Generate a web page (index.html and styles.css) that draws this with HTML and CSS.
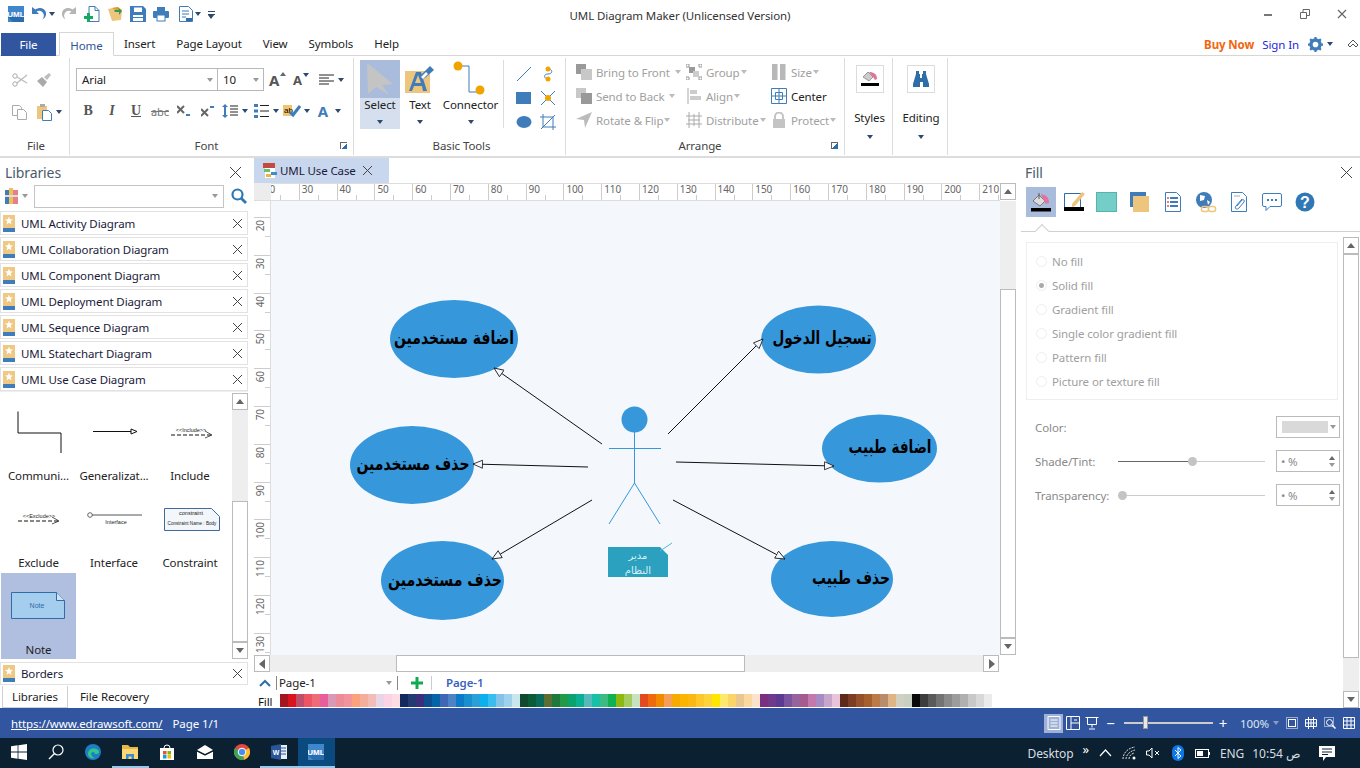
FILE: index.html
```html
<!DOCTYPE html>
<html lang="en">
<head>
    <meta charset="UTF-8">
    <title>UML Diagram Maker (Unlicensed Version)</title>
    <link rel="stylesheet" href="styles.css">
</head>
<body>

<!-- title bar -->
<header class="titlebar">
    <div class="qat">
        <svg width="16" height="16" viewBox="0 0 16 16"><rect width="16" height="16" fill="#3f86cc"/><path d="M0 11l5 5h11V11z" fill="#2a6cb0"/><text x="8" y="11" class="logo-text">UML</text></svg>
        <svg width="16" height="16" viewBox="0 0 16 16"><path d="M1 1v7h7L5.600 5.600C8 3.800 11.500 5 12.600 8c.6 1.800.2 3.800-1.200 5.500 3.200-1.600 4.400-5 3.200-8C13.200 2 8.500.6 4.400 3.500z" fill="#3f7cba"/></svg>
        <i class="caret dark cell"></i>
        <svg width="16" height="16" viewBox="0 0 16 16"><path d="M15 1v7H8l2.400-2.400C8 3.800 4.500 5 3.400 8c-.6 1.800-.2 3.800 1.200 5.500C1.400 11.900.2 8.500 1.400 5.500 2.800 2 7.500.6 11.600 3.500z" fill="#b5b5b5"/></svg>
        <svg width="16" height="16" viewBox="0 0 16 16"><path d="M5 .5h6l4 4v11H5z" fill="#fff" stroke="#3f7cba"/><path d="M11 .5v4h4" fill="none" stroke="#3f7cba"/><path d="M3 7h3v3h3v3H6v3H3v-3H0v-3h3z" fill="#18a866"/></svg>
        <svg width="16" height="16" viewBox="0 0 16 16"><path d="M1 3l9-2 5 3-1 10-9 1z" fill="#eec57d"/><path d="M5 2l6-1 4 3-2 2z" fill="#d99d3a"/><path d="M7 4h5l-1-2 4 3-3 4V6H8z" fill="#2f9a55"/></svg>
        <svg width="16" height="16" viewBox="0 0 16 16"><path d="M0 0h13l3 3v13H0z" fill="#3f7cba"/><rect x="4" y="1.500" width="8" height="4.500" fill="#fff"/><rect x="3" y="9" width="10" height="6" fill="#fff"/><rect x="3" y="11" width="10" height="1" fill="#3f7cba"/></svg>
        <svg width="16" height="16" viewBox="0 0 16 16"><rect x="4" y="1" width="8" height="5" fill="#3f7cba"/><rect y="5" width="16" height="7" rx="1" fill="#3f7cba"/><rect x="4" y="9" width="8" height="6" fill="#fff" stroke="#3f7cba"/></svg>
        <svg class="qat-doc" width="14" height="16" viewBox="0 0 14 16"><path d="M.5.500h9l4 4v11H.5z" fill="#fff" stroke="#3f7cba"/><path d="M3 5h7M3 8h7M3 11h4" stroke="#3f7cba"/><path d="M7 12h6v3H7z" fill="#2f6da8"/></svg>
        <i class="caret dark cell"></i>
        <span class="qat-more"></span>
    </div>
    <div class="title">UML Diagram Maker (Unlicensed Version)</div>
    <div class="winbtns">
        <svg width="10" height="10" viewBox="0 0 10 10"><path d="M1 6h8" stroke="#777" stroke-width="2"/></svg>
        <svg width="10" height="10" viewBox="0 0 10 10"><path d="M.5 3.500h6v6h-6zM3 3.500V.5h6.500v6H7" fill="none" stroke="#666"/></svg>
        <svg width="10" height="10" viewBox="0 0 10 10"><path d="M1 1l8 8M9 1l-8 8" stroke="#666" stroke-width="1.200"/></svg>
    </div>
</header>

<!-- ribbon tabs -->
<nav class="tabs">
    <a class="tab-file">File</a>
    <a class="tab-home">Home</a>
    <a>Insert</a>
    <a>Page Layout</a>
    <a>View</a>
    <a>Symbols</a>
    <a>Help</a>
    <div class="tabs-right">
        <b class="buy">Buy Now</b>
        <span class="signin">Sign In</span>
        <svg width="15" height="15" viewBox="0 0 16 16"><circle cx="8" cy="8" r="4.800" fill="none" stroke="#3f7cba" stroke-width="3.600"/><path d="M8 0v16M0 8h16M2.300 2.300l11.400 11.400M13.700 2.300L2.300 13.700" stroke="#3f7cba" stroke-width="2.400" stroke-dasharray="2.500 11 2.500 0"/></svg>
        <i class="caret dark"></i>
        <svg class="collapse" width="12" height="10" viewBox="0 0 12 10"><path d="M1 6l5-5 5 5-2 2-3-3-3 3z" fill="none" stroke="#555"/></svg>
    </div>
</nav>

<!-- ribbon -->
<section class="ribbon">
    <div class="group g-file">
        <div class="body file-grid">
            <svg width="16" height="16" viewBox="0 0 16 16"><circle cx="3" cy="4" r="2.200" fill="none" stroke="#aaa"/><circle cx="3" cy="12" r="2.200" fill="none" stroke="#aaa"/><path d="M5 5l10 6M5 11l10-8" stroke="#bbb" stroke-width="1.300"/></svg>
            <svg width="16" height="16" viewBox="0 0 16 16"><path d="M1 9l5-4 5 5-4 5z" fill="#aaa"/><path d="M8 5l5-4 2 2-4 5z" fill="#bdbdbd"/></svg>
            <svg width="16" height="16" viewBox="0 0 16 16"><path d="M.5 1.500h7l2 2v8h-9z" fill="#fff" stroke="#aaa"/><path d="M5.500 5.500h6l3 3v7h-9z" fill="#fff" stroke="#aaa"/></svg>
            <span class="paste">
                <svg width="16" height="17" viewBox="0 0 16 17"><rect y="2" width="10" height="13" fill="#eec57d"/><rect x="3" y="0" width="5" height="3" fill="#aaa"/><path d="M5.500 6.500h6l3 3v7h-9z" fill="#fff" stroke="#3f7cba"/></svg>
                <i class="caret dark"></i>
            </span>
        </div>
        <div class="group-label">File</div>
    </div>

    <div class="group g-font">
        <div class="body font-body">
            <div class="font-row">
                <div class="combo combo-font"><span>Arial</span><i class="caret"></i></div>
                <div class="combo combo-size"><span>10</span><i class="caret"></i></div>
                <span class="grow-a">A<i class="caret up dark"></i></span>
                <span class="grow-a small">A<i class="caret dark"></i></span>
                <svg class="align-ic" width="15" height="12" viewBox="0 0 15 12"><path d="M0 1h15M0 4h10M0 7h15M0 10h10" stroke="#222"/></svg>
                <i class="caret dark"></i>
            </div>
            <div class="font-row row2">
                <b class="fmt serif">B</b>
                <i class="fmt serif">I</i>
                <u class="fmt serif">U</u>
                <s class="fmt small-fmt">abc</s>
                <span class="fmt">
                    <svg width="14" height="12" viewBox="0 0 14 12"><path d="M0 1l7 7M7 1L0 8" stroke="#666" stroke-width="2"/><path d="M9 10h4" stroke="#3f7cba" stroke-width="2"/></svg>
                </span>
                <span class="fmt">
                    <svg width="14" height="12" viewBox="0 0 14 12"><path d="M0 4l7 7M7 4l-7 7" stroke="#666" stroke-width="2"/><path d="M9 2h4" stroke="#3f7cba" stroke-width="2"/></svg>
                </span>
                <span class="fmt2">
                    <svg width="16" height="16" viewBox="0 0 16 16"><path d="M3 1l3 3H4v8h2l-3 3-3-3h2V4H0z" fill="#3f7cba"/><path d="M8 3h8M8 6h8M8 9h8M8 12h8" stroke="#222"/></svg>
                </span>
                <i class="caret dark"></i>
                <span class="fmt2">
                    <svg width="15" height="14" viewBox="0 0 15 14"><path d="M0 0h4v3H0zM0 5.500h4v3H0zM0 11h4v3H0z" fill="#3f7cba"/><path d="M6 1.500h9M6 7h9M6 12.500h9" stroke="#222"/></svg>
                </span>
                <i class="caret dark"></i>
                <span class="fmt2">
                    <svg width="18" height="14" viewBox="0 0 18 14"><rect y="1" width="9" height="11" fill="#f1c470"/><text x="1" y="9" class="mini">ab</text><path d="M7 8l3 3 7-9" fill="none" stroke="#3f7cba" stroke-width="3"/></svg>
                </span>
                <i class="caret dark"></i>
                <span class="fmt2 blue-a">A</span>
                <i class="caret dark"></i>
            </div>
        </div>
        <div class="group-label with-launcher">Font</div>
        <i class="launcher"></i>
    </div>

    <div class="group g-tools">
        <div class="body tools-body">
            <div class="big selected">
                <div class="big-top">
                    <svg width="32" height="34" viewBox="0 0 32 34"><path d="M3 1l26 21-11 1 7 10-13-8-8 7z" fill="#c4c4c4"/></svg>
                </div>
                <div class="big-bottom">Select<i class="caret dark"></i></div>
            </div>
            <div class="big">
                <div class="big-top">
                    <svg width="30" height="28" viewBox="0 0 30 28"><rect y="6" width="25" height="22" fill="#eec57d"/><path d="M4 26L11 7h5l6 19h-4l-1-5H9l-2 5zM10 18h6l-3-8z" fill="#3f7cba"/><path d="M16 10l9-9 4 4-9 8-5 2z" fill="#3f7cba"/><path d="M16 12l5-5 2 2-5 5z" fill="#fff"/></svg>
                </div>
                <div class="big-bottom">Text<i class="caret dark"></i></div>
            </div>
            <div class="big wide">
                <div class="big-top">
                    <svg width="36" height="36" viewBox="0 0 36 36"><path d="M5 5h11v26h11" fill="none" stroke="#3f7cba"/><circle cx="5" cy="5" r="4.500" fill="#f0a400"/><circle cx="27" cy="29" r="4.500" fill="#f0a400"/></svg>
                </div>
                <div class="big-bottom">Connector<i class="caret dark"></i></div>
            </div>
            <div class="tool-sep"></div>
            <div class="tool-grid">
                <svg width="16" height="16" viewBox="0 0 16 16"><path d="M1 15L15 1" stroke="#3f7cba"/></svg>
                <svg width="16" height="16" viewBox="0 0 16 16"><path d="M8 3c5 0 5 5 0 5s-4 5 0 5" fill="none" stroke="#3f7cba"/><circle cx="8" cy="3" r="2.500" fill="#f0a400"/><circle cx="8" cy="13" r="2.500" fill="#f0a400"/></svg>
                <svg width="16" height="16" viewBox="0 0 16 16"><rect y="2" width="15" height="12" fill="#3f7cba"/></svg>
                <svg width="16" height="16" viewBox="0 0 16 16"><path d="M1 1l14 14M15 1L1 15" stroke="#3f7cba"/><circle cx="8" cy="8" r="3" fill="#f0a400"/></svg>
                <svg width="16" height="16" viewBox="0 0 16 16"><ellipse cx="8" cy="8" rx="7.500" ry="6" fill="#3f7cba"/></svg>
                <svg width="16" height="16" viewBox="0 0 16 16"><path d="M3 0v13h13M0 3h13v13M1 15L15 1" fill="none" stroke="#3f7cba"/></svg>
            </div>
        </div>
        <div class="group-label tools-label">Basic Tools</div>
    </div>

    <div class="group g-arrange">
        <div class="body arrange">
            <div class="arr-col c1">
                <div class="arr"><svg width="16" height="16" viewBox="0 0 16 16"><rect width="10" height="10" fill="#999"/><rect x="5" y="5" width="11" height="11" fill="#c8c8c8"/></svg>Bring to Front<i class="caret"></i></div>
                <div class="arr"><svg width="16" height="16" viewBox="0 0 16 16"><rect width="10" height="10" fill="#c8c8c8"/><rect x="5" y="5" width="11" height="11" fill="#999"/></svg>Send to Back<i class="caret"></i></div>
                <div class="arr"><svg width="16" height="16" viewBox="0 0 16 16"><path d="M0 7L16 0 9 16 8 8z" fill="#bbb"/></svg>Rotate &amp; Flip<i class="caret tight"></i></div>
            </div>
            <div class="arr-col c2">
                <div class="arr"><svg width="16" height="16" viewBox="0 0 16 16"><path d="M0 0h3v3H0zM13 0h3v3h-3zM0 13h3v3H0zM13 13h3v3h-3z" fill="none" stroke="#999"/><rect x="3" y="3" width="6" height="6" fill="#999"/><rect x="7" y="7" width="6" height="6" fill="#ccc"/></svg>Group<i class="caret tight"></i></div>
                <div class="arr"><svg width="16" height="16" viewBox="0 0 16 16"><path d="M2 0v16" stroke="#aaa"/><rect x="4" y="2" width="7" height="4" fill="#ccc"/><rect x="4" y="8" width="11" height="4" fill="#ccc"/></svg>Align<i class="caret tight"></i></div>
                <div class="arr"><svg width="16" height="16" viewBox="0 0 16 16"><path d="M3 0v16M13 0v16M0 4h16M0 12h16M8 2v12M2 8h12" stroke="#aaa" fill="none"/></svg>Distribute<i class="caret tight"></i></div>
            </div>
            <div class="arr-col c3">
                <div class="arr"><svg width="16" height="16" viewBox="0 0 16 16"><rect x="1" width="5.500" height="16" fill="#b8b8b8"/><rect x="9" width="5.500" height="16" fill="#b8b8b8"/></svg>Size<i class="caret tight"></i></div>
                <div class="arr on"><svg width="16" height="16" viewBox="0 0 16 16"><path d="M.5.500h15v15H.5zM4.500 4.500h7v7h-7zM8 .5v15M.5 8h15" fill="none" stroke="#3f7cba"/></svg>Center</div>
                <div class="arr"><svg width="16" height="16" viewBox="0 0 16 16"><path d="M4 7V4.500a4 4 0 0 1 8 0V7" fill="none" stroke="#c4c4c4" stroke-width="2"/><rect x="2" y="7" width="12" height="9" fill="#c4c4c4"/></svg>Protect<i class="caret tight"></i></div>
            </div>
        </div>
        <div class="group-label with-launcher">Arrange</div>
        <i class="launcher"></i>
    </div>

    <div class="group g-styles">
        <div class="box-btn">
            <div class="box">
                <svg width="18" height="18" viewBox="0 0 18 18"><path d="M2 7l5-5 5 5-4 4z" fill="#ccc" stroke="#666" stroke-width=".6"/><path d="M8 2c5 0 8 2 8 7l-2 1-2-3z" fill="#e0749c"/><rect x="0" y="13" width="18" height="3" fill="#000"/></svg>
            </div>
            <span>Styles</span>
            <i class="caret dark"></i>
        </div>
    </div>

    <div class="group g-editing">
        <div class="box-btn">
            <div class="box">
                <svg width="16" height="16" viewBox="0 0 16 16"><path d="M3 0h3v3h1v4h2V3h1V0h3v3l3 10v3h-6v-5H7v5H0v-3L3 3z" fill="#2f6da8"/></svg>
            </div>
            <span>Editing</span>
            <i class="caret dark"></i>
        </div>
    </div>
</section>

<main class="workspace">
    <!-- left: libraries -->
    <aside class="libraries">
        <div class="pane-title"><span>Libraries</span><i class="close"></i></div>
        <div class="lib-search">
            <svg width="14" height="16" viewBox="0 0 14 16"><rect y="2" width="4" height="14" fill="#3f7cba"/><rect x="4" y="0" width="4" height="16" fill="#eec057"/><rect x="8" y="2" width="5" height="14" fill="#e3808a"/><rect y="7" width="13" height="2" fill="#ddd"/></svg>
            <i class="caret"></i>
            <div class="search-box"><i class="caret"></i></div>
            <svg width="16" height="16" viewBox="0 0 16 16"><circle cx="6.500" cy="6.500" r="5" fill="none" stroke="#2f77b5" stroke-width="2.200"/><path d="M10 10l5 5" stroke="#2f77b5" stroke-width="2.800"/></svg>
        </div>
        <ul class="lib-list">
            <li><i class="lib-ic"></i>UML Activity Diagram<i class="close small"></i></li>
            <li><i class="lib-ic"></i>UML Collaboration Diagram<i class="close small"></i></li>
            <li><i class="lib-ic"></i>UML Component Diagram<i class="close small"></i></li>
            <li><i class="lib-ic"></i>UML Deployment Diagram<i class="close small"></i></li>
            <li><i class="lib-ic"></i>UML Sequence Diagram<i class="close small"></i></li>
            <li><i class="lib-ic"></i>UML Statechart Diagram<i class="close small"></i></li>
            <li><i class="lib-ic"></i>UML Use Case Diagram<i class="close small"></i></li>
        </ul>
        <div class="symbols-wrap">
            <div class="symbols">
                <div class="sym row-a">
                    <svg width="75" height="72" viewBox="0 0 75 72"><path d="M17 18.500V40h43v20" fill="none" stroke="#111"/></svg>
                    <span>Communi...</span>
                </div>
                <div class="sym row-a">
                    <svg width="75" height="72" viewBox="0 0 75 72"><path d="M16 38.500h38" stroke="#111"/><path d="M54 36l6 2.500-6 2.500z" fill="#fff" stroke="#111"/></svg>
                    <span>Generalizat...</span>
                </div>
                <div class="sym row-a">
                    <svg width="75" height="72" viewBox="0 0 75 72"><text x="38" y="39" class="tiny">&lt;&lt;Include&gt;&gt;</text><path d="M18 42h40" stroke="#111" stroke-dasharray="4 2"/><path d="M52 38l7 4-7 3" fill="none" stroke="#111" stroke-width=".7"/></svg>
                    <span>Include</span>
                </div>
                <div class="sym row-b">
                    <svg width="75" height="62" viewBox="0 0 75 62"><text x="38" y="31" class="tiny">&lt;&lt;Exclude&gt;&gt;</text><path d="M17 34h40" stroke="#111" stroke-dasharray="4 2"/><path d="M51 30l7 4-7 3" fill="none" stroke="#111" stroke-width=".7"/></svg>
                    <span>Exclude</span>
                </div>
                <div class="sym row-b">
                    <svg width="75" height="62" viewBox="0 0 75 62"><circle cx="13" cy="28" r="2.300" fill="#fff" stroke="#666"/><path d="M15 28h50" stroke="#555"/><text x="39" y="37" class="tiny">Interface</text></svg>
                    <span>Interface</span>
                </div>
                <div class="sym row-b">
                    <svg width="75" height="62" viewBox="0 0 75 62"><path d="M11.500 21.500h47l8 8v14h-55z" fill="#f3f6fb" stroke="#3e6b9c"/><text x="38" y="28" class="tiny">constraint</text><text x="39" y="38" class="tiny narrow">Constraint Name : Body</text></svg>
                    <span>Constraint</span>
                </div>
                <div class="sym row-c selected-sym">
                    <svg width="75" height="62" viewBox="0 0 75 62"><path d="M10.500 19.500h45l8 8v18h-53z" fill="#a5cdee" stroke="#2f6da8"/><path d="M55.500 19.500v8h8" fill="#cfe3f5" stroke="#2f6da8"/><text x="36" y="35" class="tiny blue">Note</text></svg>
                    <span>Note</span>
                </div>
            </div>
            <div class="vscroll lib-scroll">
                <button class="sb up"></button>
                <div class="track"><div class="gap-a"></div><div class="thumb"></div></div>
                <button class="sb down"></button>
            </div>
        </div>
        <div class="lib-item-borders"><i class="lib-ic"></i>Borders<i class="close small"></i></div>
        <div class="lib-tabs"><span class="active">Libraries</span><span>File Recovery</span></div>
    </aside>

    <!-- center: drawing -->
    <section class="center">
        <div class="doc-tabs">
            <div class="doc-tab">
                <svg width="16" height="16" viewBox="0 0 16 16"><rect x="1" y="0" width="12" height="5" fill="#c24a3f"/><rect x="3" y="5" width="10" height="10" fill="#fff"/><rect x="2" y="6" width="6" height="3" fill="#6cbf6a"/><rect x="4" y="11" width="5" height="3" fill="#eeb53c"/><rect x="9" y="9" width="6" height="3" fill="#3f8ecc"/></svg>
                <span>UML Use Case</span>
                <i class="close small"></i>
            </div>
        </div>
        <div class="ruler-row">
            <div class="ruler-corner"></div>
            <div class="h-ruler"><div id="hRuler" class="h-ruler-in"></div></div>
            <button class="sb up"></button>
        </div>
        <div class="canvas-row">
            <div class="v-ruler"><div id="vRuler" class="v-ruler-in"></div></div>
            <div class="canvas">
                <svg width="729" height="454" viewBox="271 201 729 454">
                    <defs>
                        <marker id="tri" markerWidth="12" markerHeight="10" refX="10" refY="4.500" orient="auto" markerUnits="userSpaceOnUse">
                            <path d="M.5.500L10 4.500.5 8.500z" fill="#f4f7fb" stroke="#111" stroke-width=".8"/>
                        </marker>
                    </defs>
                    <ellipse class="uc" cx="454" cy="339" rx="64" ry="39"/>
                    <ellipse class="uc" cx="818.500" cy="339.500" rx="57.500" ry="34"/>
                    <ellipse class="uc" cx="412" cy="465" rx="62" ry="39"/>
                    <ellipse class="uc" cx="879.500" cy="448.500" rx="57.500" ry="34"/>
                    <ellipse class="uc" cx="442.500" cy="580.500" rx="61.500" ry="39.500"/>
                    <ellipse class="uc" cx="832" cy="579" rx="61" ry="38"/>

                    <text class="uc-text" x="454" y="344" textLength="120" lengthAdjust="spacingAndGlyphs">اضافة مستخدمين</text>
                    <text class="uc-text" x="822" y="344" textLength="99" lengthAdjust="spacingAndGlyphs">تسجيل الدخول</text>
                    <text class="uc-text" x="413" y="470" textLength="113" lengthAdjust="spacingAndGlyphs">حذف مستخدمين</text>
                    <text class="uc-text" x="890" y="453" textLength="83" lengthAdjust="spacingAndGlyphs">اضافة طبيب</text>
                    <text class="uc-text" x="445" y="586" textLength="114" lengthAdjust="spacingAndGlyphs">حذف مستخدمين</text>
                    <text class="uc-text" x="851" y="584" textLength="78" lengthAdjust="spacingAndGlyphs">حذف طبيب</text>

                    <path class="assoc" d="M602 444L494 368"/>
                    <path class="assoc" d="M668 434L763 339"/>
                    <path class="assoc" d="M588 467L473 464"/>
                    <path class="assoc" d="M676 462L834 466"/>
                    <path class="assoc" d="M592 500L492 559"/>
                    <path class="assoc" d="M673 500L785 559"/>

                    <circle cx="634.500" cy="419.500" r="13" fill="#3797db"/>
                    <path class="actor" d="M634.500 432v51M609 448.500h52M609 524l25.500-41 25.500 41"/>

                    <path d="M608 547h52l8 8v22h-60z" fill="#2ba0bf"/>
                    <path d="M660 551l12-8" stroke="#55b9d2"/>
                    <text class="note-text" x="638" y="559">مدير</text>
                    <text class="note-text" x="638" y="574">النظام</text>
                </svg>
            </div>
            <div class="vscroll canvas-scroll">
                <div class="track"><div class="gap-b"></div><div class="thumb"></div></div>
                <button class="sb down"></button>
            </div>
        </div>
        <div class="hscroll">
            <button class="sb left"></button>
            <div class="htrack"><div class="hthumb"></div></div>
            <button class="sb right"></button>
        </div>
        <div class="page-bar">
            <svg width="12" height="8" viewBox="0 0 12 8"><path d="M1 7l5-5 5 5" fill="none" stroke="#2f6da8" stroke-width="2"/></svg>
            <div class="page-select">Page-1<i class="caret"></i></div>
            <svg width="14" height="14" viewBox="0 0 14 14"><path d="M5.500 1h3v4.500H13v3H8.500V13h-3V8.500H1v-3h4.500z" fill="#10ab50"/></svg>
            <span class="page-name">Page-1</span>
        </div>
        <div class="color-bar">
            <span class="fill-label">Fill</span>
            <div id="swatches" class="swatches"></div>
        </div>
    </section>

    <!-- right: fill panel -->
    <aside class="fillpane">
        <div class="pane-title fill-title"><span>Fill</span><i class="close"></i></div>
        <div class="fill-icons">
            <span class="on"><svg width="22" height="22" viewBox="0 0 22 22"><path d="M3 10l6-6 6 6-5 5z" fill="#ddd" stroke="#555" stroke-width=".7"/><path d="M9 2v6" stroke="#555"/><path d="M11 3c5 1 8 3 8 9l-3 1-3-5z" fill="#e0749c"/><rect x="1" y="17" width="20" height="3.500" fill="#000"/></svg></span>
            <span><svg width="22" height="22" viewBox="0 0 22 22"><path d="M1.500 2.500h16v14h-16z" fill="#fff" stroke="#2f6da8"/><path d="M9 13L19 1l3 2-10 12-3 1z" fill="#eec57d"/><rect x="1" y="16" width="20" height="4" fill="#000"/></svg></span>
            <span><svg width="22" height="22" viewBox="0 0 22 22"><rect x=".5" y="1.500" width="20" height="19" fill="#74cdc6" stroke="#54b5ad"/></svg></span>
            <span><svg width="22" height="22" viewBox="0 0 22 22"><rect x="1" y="1" width="16" height="15" fill="#3f7cba"/><rect x="4" y="5" width="16" height="16" fill="#eec57d"/></svg></span>
            <span><svg width="18" height="22" viewBox="0 0 18 22"><path d="M1.500 1.500h11l4 4v15h-15z" fill="#fff" stroke="#3f7cba"/><path d="M6 7h8M6 11h8M6 15h8" stroke="#3f7cba" stroke-width="2"/><path d="M3 7h2M3 11h2M3 15h2" stroke="#e3808a" stroke-width="2"/></svg></span>
            <span><svg width="22" height="22" viewBox="0 0 22 22"><circle cx="9" cy="9" r="8" fill="#3f7cba"/><path d="M5 4l5 1-1 4-4 1zM12 9l3 2-2 3z" fill="#fff"/><rect x="6.500" y="15.500" width="7" height="5" rx="2" fill="none" stroke="#eec57d" stroke-width="1.500"/><rect x="13.500" y="15.500" width="7" height="5" rx="2" fill="none" stroke="#eec57d" stroke-width="1.500"/></svg></span>
            <span><svg width="16" height="22" viewBox="0 0 16 22"><path d="M.5 1.500h11l4 4v15H.5z" fill="#fff" stroke="#3f7cba"/><path d="M3 5h6" stroke="#aaa"/><path d="M11 8l-6 7c-2 3 1 4 3 2l5-6c1-2-1-3-2-2l-5 6" fill="none" stroke="#3f7cba"/></svg></span>
            <span><svg width="20" height="20" viewBox="0 0 20 20"><path d="M2 1.500h16a1.500 1.500 0 0 1 1.500 1.500v10a1.500 1.500 0 0 1-1.500 1.500H8l-4 4v-4H2A1.500 1.500 0 0 1 .5 13V3A1.500 1.500 0 0 1 2 1.500z" fill="#fff" stroke="#3f7cba"/><path d="M5 8h2M9 8h2M13 8h2" stroke="#3f7cba" stroke-width="2"/></svg></span>
            <span><svg width="20" height="20" viewBox="0 0 20 20"><circle cx="10" cy="10" r="9.500" fill="#2f77b5"/><text x="10" y="15.500" class="help">?</text></svg></span>
        </div>
        <div class="notch-line"><i></i></div>
        <div class="fill-main">
            <div class="fill-content">
                <div class="fill-options">
                    <label><i class="radio"></i>No fill</label>
                    <label><i class="radio dot"></i>Solid fill</label>
                    <label><i class="radio"></i>Gradient fill</label>
                    <label><i class="radio"></i>Single color gradient fill</label>
                    <label><i class="radio"></i>Pattern fill</label>
                    <label><i class="radio"></i>Picture or texture fill</label>
                </div>
                <div class="prop">
                    <span class="prop-name">Color:</span>
                    <div class="color-box"><i></i><em class="caret"></em></div>
                </div>
                <div class="prop">
                    <span class="prop-name">Shade/Tint:</span>
                    <div class="slider half"><i></i></div>
                    <div class="spin">
                        <span>• %</span>
                        <em class="spin-arrows"><i class="caret up"></i><i class="caret"></i></em>
                    </div>
                </div>
                <div class="prop">
                    <span class="prop-name">Transparency:</span>
                    <div class="slider"><i></i></div>
                    <div class="spin">
                        <span>• %</span>
                        <em class="spin-arrows"><i class="caret up"></i><i class="caret"></i></em>
                    </div>
                </div>
            </div>
            <div class="vscroll fill-scroll">
                <button class="sb up"></button>
                <div class="track"><div class="thumb"></div></div>
                <button class="sb down"></button>
            </div>
        </div>
    </aside>
</main>

<!-- status bar -->
<footer class="statusbar">
    <a class="site">https://www.edrawsoft.com/</a>
    <span class="pageno">Page 1/1</span>
    <div class="status-right">
        <span class="view on"><svg width="14" height="14" viewBox="0 0 14 14"><path d="M1 .5h12v13H1zM3.500 4h7M3.500 7h7M3.500 10h7" fill="none" stroke="#fff"/></svg></span>
        <span class="view"><svg width="14" height="14" viewBox="0 0 14 14"><path d="M.5.500h13v13H.5zM5 .5v13M8 4h3M5 7h8" fill="none" stroke="#fff"/></svg></span>
        <span class="view"><svg width="14" height="14" viewBox="0 0 14 14"><path d="M.5 1.500h13M2.500 1.500v7h9v-7M7 8.500v3M4 13h6" fill="none" stroke="#fff"/></svg></span>
        <span class="zoom-sign">−</span>
        <div class="zoom-slider"><i></i></div>
        <span class="zoom-sign plus">+</span>
        <span class="zoom-val">100%</span>
        <i class="caret"></i>
        <span class="view r"><svg width="12" height="12" viewBox="0 0 12 12"><path d="M.5.500h11v11H.5z" fill="none" stroke="#fff" stroke-dasharray="1 1"/><rect x="2.500" y="2.500" width="7" height="7" fill="none" stroke="#fff"/></svg></span>
        <span class="view r"><svg width="12" height="12" viewBox="0 0 12 12"><path d="M.5 2.500h11v7H.5zM3.500 0v12M8.500 0v12M6 2v8M1 6h10" fill="none" stroke="#fff"/></svg></span>
        <span class="view r"><svg width="12" height="12" viewBox="0 0 12 12"><path d="M.5.500h9v9h-9z" fill="none" stroke="#fff" stroke-dasharray="1 1"/><circle cx="5.500" cy="5.500" r="3" fill="none" stroke="#fff"/><path d="M8 8l3.500 3.500" stroke="#fff" stroke-width="1.500"/></svg></span>
        <span class="view r"><svg width="12" height="12" viewBox="0 0 12 12"><path d="M.5.500h11v11H.5zM4 0v12M8 0v12M0 4h12M0 8h12" fill="none" stroke="#fff"/></svg></span>
    </div>
</footer>

<!-- windows taskbar -->
<footer class="taskbar">
    <div class="apps">
        <span><svg width="16" height="16" viewBox="0 0 16 16"><path d="M0 2.300L6.600 1.300v6.200H0zM7.400 1.200L16 0v7.500H7.400zM0 8.400h6.600v6.300L0 13.700zM7.400 8.400H16V16l-8.600-1.200z" fill="#fff"/></svg></span>
        <span><svg width="16" height="16" viewBox="0 0 16 16"><circle cx="10" cy="6" r="5" fill="none" stroke="#fff" stroke-width="1.200"/><path d="M6.500 9.500L1 15" stroke="#fff" stroke-width="1.400"/></svg></span>
        <span><svg width="16" height="16" viewBox="0 0 16 16"><circle cx="8" cy="8" r="8" fill="#1b7fc4"/><path d="M3 10c0-5 6-7 10-4 2 2 1 4-2 4-2 0-1-2-3-2-3 0-2 5 2 6-4 1-7-1-7-4z" fill="#36c48b"/></svg></span>
        <span class="open"><svg width="16" height="14" viewBox="0 0 16 14"><path d="M0 0h6l2 2h8v12H0z" fill="#eab544"/><path d="M0 4h16v10H0z" fill="#fbd875"/><path d="M4 14V9h8v5H9.500v-2.500h-3V14z" fill="#3a8dcf"/></svg></span>
        <span><svg width="16" height="16" viewBox="0 0 16 16"><path d="M1 4h14v12H1z" fill="#fff"/><path d="M5 4a3 3 0 0 1 6 0" fill="none" stroke="#fff"/><rect x="4" y="7" width="3.500" height="3.500" fill="#f25022"/><rect x="8.500" y="7" width="3.500" height="3.500" fill="#7fba00"/><rect x="4" y="11" width="3.500" height="3.500" fill="#00a4ef"/><rect x="8.500" y="11" width="3.500" height="3.500" fill="#ffb900"/></svg></span>
        <span><svg width="16" height="14" viewBox="0 0 16 14"><path d="M0 5l8-5 8 5-8 4z" fill="#fff"/><path d="M0 6.500l8 4 8-4V14H0z" fill="#fff"/><path d="M0 6l8 4 8-4" fill="none" stroke="#0b2030"/></svg></span>
        <span><svg width="16" height="16" viewBox="0 0 16 16"><circle cx="8" cy="8" r="8" fill="#e8453c"/><path d="M8 8L15 4a8 8 0 0 1-5 11.700z" fill="#fbc02d"/><path d="M8 8L10 15.700A8 8 0 0 1 1 4z" fill="#3aa655"/><circle cx="8" cy="8" r="3.800" fill="#4a8bf0" stroke="#fff"/></svg></span>
        <span class="open"><svg width="16" height="16" viewBox="0 0 16 16"><rect x="6" y="1" width="10" height="14" fill="#e8eef7"/><path d="M9 4h6M9 7h6M9 10h6" stroke="#2a5699"/><path d="M0 2l10-2v16L0 14z" fill="#2a5699"/><text x="5" y="11" class="w-text">W</text></svg></span>
        <span class="open active"><svg width="16" height="16" viewBox="0 0 16 16"><rect width="16" height="16" fill="#3f86cc"/><path d="M0 11l5 5h11V11z" fill="#2a6cb0"/><text x="8" y="11" class="logo-text">UML</text></svg></span>
    </div>
    <div class="tray">
        <span class="t-desktop">Desktop</span>
        <span class="t-more">»</span>
        <svg width="13" height="8" viewBox="0 0 13 8"><path d="M1 7l5.500-6L12 7" fill="none" stroke="#fff" stroke-width="1.200"/></svg>
        <svg width="14" height="14" viewBox="0 0 14 14"><path d="M1 13C1 7 6 2 13 1M4 13c0-4 4-8 9-9M7 13c0-3 2-5 5-6" fill="none" stroke="#ddd" stroke-dasharray="2 1"/><circle cx="12" cy="12" r="1.500" fill="#fff"/></svg>
        <svg width="15" height="12" viewBox="0 0 15 12"><path d="M.5 4h2.500l3-3v10L3 8H.5z" fill="none" stroke="#fff"/><path d="M9 4l4 4M13 4l-4 4" stroke="#fff"/></svg>
        <svg class="bt" width="12" height="16" viewBox="0 0 12 16"><rect width="12" height="16" rx="6" fill="#0a78e8"/><path d="M3 5l6 6-3 2.500v-11L9 5l-6 6" fill="none" stroke="#fff"/></svg>
        <svg width="15" height="9" viewBox="0 0 15 9"><rect x=".5" y=".5" width="13" height="8" fill="none" stroke="#fff"/><rect x="2" y="2" width="6" height="5" fill="#fff"/><rect x="14" y="3" width="1" height="3" fill="#fff"/></svg>
        <span class="t-lang">ENG</span>
        <span class="t-clock">10:54 <span lang="ar">ص</span></span>
        <svg class="t-note" width="16" height="15" viewBox="0 0 16 15"><path d="M0 0h16v11H7l-3 4v-4H0z" fill="#fff"/><path d="M3 3h10M3 6h10M3 8.500h6" stroke="#0b2030"/></svg>
    </div>
</footer>

<script src="script.js"></script>
</body>
</html>
```

FILE: styles.css
```css
* {
    box-sizing: border-box;
}
html, body {
    margin: 0;
    height: 768px;
    overflow: hidden;
}
body {
    font-family: "Noto Sans", "Open Sans", sans-serif;
    font-size: 11.5px;
    letter-spacing: -0.1px;
    color: #222;
    background: #fff;
    display: flex;
    flex-direction: column;
}
svg {
    flex: none;
    display: block;
}
svg text {
    letter-spacing: 0;
}
button {
    padding: 0;
}

/* small shared bits */
.caret {
    display: inline-block;
    flex: none;
    width: 0;
    height: 0;
    border-left: 3.5px solid transparent;
    border-right: 3.5px solid transparent;
    border-top: 4px solid #999;
}
.caret.dark {
    border-top-color: #2c4a70;
}
.caret.up {
    border-top: 0;
    border-bottom: 4px solid #666;
}
.close {
    display: block;
    flex: none;
    margin-left: auto;
    width: 11px;
    height: 11px;
    background:
        linear-gradient(45deg, transparent 46%, #444 46%, #444 54%, transparent 54%),
        linear-gradient(-45deg, transparent 46%, #444 46%, #444 54%, transparent 54%);
}
.close.small {
    width: 9px;
    height: 9px;
}

/* title bar */
.titlebar {
    height: 32px;
    flex: none;
    display: grid;
    grid-template-columns: 1fr auto 1fr;
    align-items: center;
    padding-bottom: 2px;
}
.qat {
    display: flex;
    align-items: center;
    gap: 7px;
    padding: 0 0 2px 8px;
}
.cell {
    margin: 0 -1px 0 -5px;
}
.qat-doc {
    margin-left: 3px;
}
.qat-more {
    width: 7px;
    height: 7px;
    margin-left: 1px;
    border-top: 1px solid #2c4a70;
    background: linear-gradient(#2c4a70, #2c4a70) top 2px left no-repeat;
    background-size: 7px 1px;
    position: relative;
}
.qat-more::after {
    content: "";
    position: absolute;
    left: 0;
    top: 3px;
    border-left: 3.5px solid transparent;
    border-right: 3.5px solid transparent;
    border-top: 4px solid #2c4a70;
}
.logo-text {
    font: bold 8px "Liberation Sans", sans-serif;
    fill: #fff;
    text-anchor: middle;
}
.title {
    color: #333;
}
.winbtns {
    display: flex;
    justify-content: flex-end;
    gap: 27px;
    padding: 0 13px 2px 0;
}

/* tabs */
.tabs {
    height: 24px;
    flex: none;
    display: flex;
    align-items: center;
    gap: 21px;
    padding-left: 1px;
    position: relative;
    z-index: 1;
}
.tabs a {
    line-height: 26px;
    color: #222;
}
.tab-file {
    width: 55px;
    height: 23px;
    line-height: 23px !important;
    text-align: center;
    background: #31569f;
    color: #fff !important;
    margin-right: -18px;
}
.tab-home {
    width: 55px;
    height: 24px;
    margin-right: -11px;
    text-align: center;
    border: 1px solid #d6d6d6;
    border-bottom: 1px solid #fff;
    color: #2f5597 !important;
}
.tabs-right {
    margin-left: auto;
    display: flex;
    align-items: center;
    padding-right: 1px;
}
.buy {
    color: #f0660f;
    margin-right: 8px;
}
.signin {
    color: #1f1fe0;
    margin-right: 8px;
}
.tabs-right svg:first-of-type {
    margin-left: 1px;
}
.tabs-right .caret {
    margin: 0 14px 0 4px;
}

/* ribbon */
.ribbon {
    height: 103px;
    flex: none;
    display: flex;
    padding: 2px 0 1px 3px;
    border-top: 1px solid #d6d6d6;
    border-bottom: 2px solid #dcdcdc;
    margin-top: -1px;
}
.group {
    display: flex;
    flex-direction: column;
    border-right: 1px solid #dcdcdc;
    position: relative;
}
.g-file { width: 67px; }
.g-font { width: 284px; }
.g-tools { width: 212px; }
.g-arrange { width: 279px; }
.g-styles { width: 48px; }
.g-editing { width: 55px; }
.body {
    flex: 1;
}
.group-label {
    height: 21px;
    line-height: 23px;
    text-align: center;
    color: #444;
}
.group-label.with-launcher {
    padding-right: 10px;
}
.tools-label {
    padding-left: 4px;
}
.launcher {
    position: absolute;
    right: 6px;
    bottom: 6px;
    width: 7px;
    height: 7px;
    border-top: 1px solid #666;
    border-left: 1px solid #666;
    background: linear-gradient(135deg, transparent 50%, #2f6da8 50%);
}
.file-grid {
    display: grid;
    grid-template-columns: 24px 32px;
    grid-template-rows: 24px 24px;
    row-gap: 8px;
    padding: 10px 0 0 9px;
    align-items: center;
}
.paste {
    display: flex;
    align-items: center;
    gap: 3px;
    padding-left: 1px;
}

.font-body {
    padding: 10px 0 0 6px;
}
.font-row {
    display: flex;
    align-items: center;
    height: 23px;
}
.combo {
    display: flex;
    align-items: center;
    justify-content: space-between;
    height: 23px;
    padding: 0 4px 0 5px;
    border: 1px solid #b8b8b8;
    margin-right: -1px;
}
.combo-font { width: 142px; }
.combo-size { width: 47px; margin-right: 5px; }
.grow-a {
    width: 24px;
    display: flex;
    font: bold 15px "Noto Sans", sans-serif;
    color: #555;
    gap: 1px;
}
.grow-a.small {
    font-size: 13px;
    align-items: flex-end;
}
.grow-a.small .caret {
    align-self: flex-start;
}
.grow-a .caret {
    margin-top: 2px;
    border-left-width: 3px;
    border-right-width: 3px;
}
.align-ic {
    margin: 0 4px 0 2px;
}
.row2 {
    height: 22px;
    margin-top: 9px;
}
.fmt {
    width: 24px;
    display: flex;
    justify-content: center;
    align-items: center;
    color: #555;
}
.serif {
    font-family: "Liberation Serif", serif;
    font-size: 14px;
    font-weight: bold;
}
.small-fmt {
    font-size: 11px;
    color: #777;
}
.fmt2 {
    width: 20px;
    display: flex;
    justify-content: center;
}
.row2 .caret {
    margin: 0 3px 0 2px;
}
.blue-a {
    font: bold 15px "Noto Sans", sans-serif;
    color: #3f7cba;
}
.mini {
    font: 8px "Liberation Sans", sans-serif;
}

.tools-body {
    display: flex;
    padding: 2px 0 0 6px;
}
.big {
    width: 40px;
    height: 69px;
    display: flex;
    flex-direction: column;
    text-align: center;
}
.big.wide {
    width: 61px;
}
.big-top {
    height: 38px;
    display: flex;
    justify-content: center;
    align-items: center;
}
.big-bottom {
    flex: 1;
    display: flex;
    flex-direction: column;
    align-items: center;
    gap: 8px;
    line-height: 14px;
}
.big.selected .big-top {
    background: #aabcdc;
}
.big.selected .big-bottom {
    background: #d5dfee;
}
.tool-sep {
    width: 1px;
    height: 68px;
    margin: 0 12px 0 2px;
    background: #dcdcdc;
}
.tool-grid {
    display: grid;
    grid-template-columns: 16px 16px;
    column-gap: 8px;
    grid-auto-rows: 24px;
    align-content: start;
    align-items: center;
    padding-top: 2px;
}

.arrange {
    display: flex;
    padding: 2px 0 0 10px;
}
.c1 { width: 110px; }
.c2 { width: 85px; }
.arr {
    height: 24px;
    display: flex;
    align-items: center;
    gap: 4px;
    color: #a0a0a0;
    white-space: nowrap;
}
.arr .caret {
    border-top-color: #bbb;
    margin-left: 1px;
}
.arr .caret.tight {
    margin-left: -3px;
}
.arr.on {
    color: #222;
}

.box-btn {
    display: flex;
    flex-direction: column;
    align-items: center;
    padding: 7px 0 0 2px;
}
.box {
    width: 28px;
    height: 28px;
    border: 1px solid #dcdcdc;
    display: flex;
    align-items: center;
    justify-content: center;
    margin-bottom: 17px;
}
.box-btn .caret {
    margin-top: 10px;
}

/* workspace */
.workspace {
    flex: 1;
    display: flex;
    min-height: 0;
}

/* libraries pane */
.libraries {
    width: 252px;
    flex: none;
    padding-right: 4px;
    display: flex;
    flex-direction: column;
}
.pane-title {
    height: 26px;
    display: flex;
    align-items: center;
    padding: 2px 7px 0 5px;
    font-size: 14px;
    color: #4b5a6e;
}
.lib-search {
    height: 24px;
    display: flex;
    align-items: center;
    gap: 3px;
    padding-left: 5px;
    margin-bottom: 3px;
}
.search-box {
    width: 190px;
    height: 23px;
    margin: 0 4px 0 3px;
    border: 1px solid #c4c4c4;
    display: flex;
    align-items: center;
    justify-content: flex-end;
    padding-right: 5px;
}
.lib-list {
    list-style: none;
    margin: 0;
    padding: 0;
}
.lib-list li, .lib-item-borders {
    height: 24px;
    display: flex;
    align-items: center;
    border: 1px solid #e2e2e2;
    margin-bottom: 2px;
    padding: 0 5px 0 2px;
    color: #1a1a3a;
}
.lib-ic {
    flex: none;
    width: 12px;
    height: 17px;
    margin-right: 6px;
    position: relative;
    background: linear-gradient(#efc983 0, #efc983 13px, #3f7cba 13px);
}
.lib-ic::before {
    content: "";
    position: absolute;
    left: 2px;
    top: 2px;
    width: 8px;
    height: 8px;
    background: #fff;
    clip-path: polygon(50% 0, 63% 35%, 100% 38%, 72% 60%, 81% 100%, 50% 78%, 19% 100%, 28% 60%, 0 38%, 37% 35%);
}
.symbols-wrap {
    height: 268px;
    display: flex;
    border-top: 1px solid #eee;
    margin-top: -2px;
}
.symbols {
    width: 232px;
    flex: none;
    display: grid;
    grid-template-columns: 75px 76px 76px;
    grid-template-rows: 95px 86px 86px;
    align-content: start;
    padding-left: 1px;
}
.sym {
    display: flex;
    flex-direction: column;
    justify-content: space-between;
    align-items: center;
    overflow: hidden;
    color: #222;
    white-space: nowrap;
}
.row-a { padding: 1px 0 4px; }
.row-b { padding-bottom: 3px; }
.row-c { padding-bottom: 2px; }
.selected-sym {
    background: #b0bedf;
}
.tiny {
    font: 5.5px "Liberation Sans", sans-serif;
    text-anchor: middle;
    fill: #222;
}
.tiny.narrow {
    font-size: 4.6px;
}
.tiny.blue {
    fill: #2f6da8;
    font-size: 7px;
}
.lib-scroll {
    height: 266px;
    width: 16px;
    margin-top: 1px;
}
.lib-item-borders {
    margin: 3px 0 1px;
    height: 23px;
}
.lib-tabs {
    height: 22px;
    display: flex;
    padding-left: 2px;
    align-items: flex-start;
}
.lib-tabs span {
    line-height: 21px;
    padding: 0 12px;
}
.lib-tabs .active {
    width: 66px;
    text-align: center;
    padding: 0;
    border: 1px solid #d0d0d0;
    border-top: 0;
}

/* scroll bars */
.vscroll {
    display: flex;
    flex-direction: column;
    flex: none;
}
.track {
    flex: 1;
    background: #eee;
    display: flex;
    flex-direction: column;
}
.gap-a { height: 91px; flex: none; }
.gap-b { height: 88px; flex: none; }
.thumb {
    flex: 1;
    background: #fff;
    border: 1px solid #bbb;
}
.sb {
    width: 16px;
    height: 17px;
    flex: none;
    background: #fff;
    border: 1px solid #bbb;
    position: relative;
}
.sb::after {
    content: "";
    position: absolute;
    left: 3px;
    top: 5px;
    border-left: 4px solid transparent;
    border-right: 4px solid transparent;
}
.sb.up::after { border-bottom: 5px solid #666; }
.sb.down::after { border-top: 5px solid #666; }
.sb.left::after {
    left: 4px;
    top: 3px;
    border: 0;
    border-top: 5px solid transparent;
    border-bottom: 5px solid transparent;
    border-right: 6px solid #666;
}
.sb.right::after {
    left: 5px;
    top: 3px;
    border: 0;
    border-top: 5px solid transparent;
    border-bottom: 5px solid transparent;
    border-left: 6px solid #666;
}

/* center */
.center {
    width: 764px;
    flex: none;
    padding-left: 2px;
    display: flex;
    flex-direction: column;
}
.doc-tabs {
    height: 25px;
    flex: none;
}
.doc-tab {
    width: 135px;
    height: 25px;
    background: #c9d7ee;
    display: flex;
    align-items: center;
    gap: 2px;
    padding: 0 18px 0 8px;
    color: #1a1a3a;
    white-space: nowrap;
}
.doc-tab .close {
    margin-left: 5px;
}
.ruler-row {
    height: 18px;
    flex: none;
    display: flex;
}
.ruler-corner {
    width: 17px;
    background: #ececec;
    border-bottom: 1px solid #ddd;
}
.h-ruler {
    width: 729px;
    overflow: hidden;
    border-top: 1px solid #ddd;
    border-bottom: 1px solid #ddd;
}
.h-ruler-in {
    display: flex;
    margin-left: -10px;
}
.h-tick {
    flex: none;
    width: 37.8px;
    height: 16px;
    border-left: 1px solid #ccc;
    padding-left: 2px;
    font-size: 10px;
    line-height: 11px;
    color: #666;
    position: relative;
}
.h-tick::after {
    content: "";
    position: absolute;
    left: 18px;
    bottom: 0;
    height: 5px;
    border-left: 1px solid #ccc;
}
.canvas-row {
    height: 454px;
    flex: none;
    display: flex;
}
.v-ruler {
    width: 17px;
    flex: none;
    overflow: hidden;
    border-right: 1px solid #ddd;
}
.v-ruler-in {
    margin-top: 16px;
}
.v-tick {
    height: 37.8px;
    border-top: 1px solid #ccc;
    position: relative;
    font-size: 10px;
    line-height: 11px;
    color: #666;
    padding-top: 2px;
}
.v-tick span {
    display: block;
    writing-mode: vertical-rl;
    transform: rotate(180deg);
    margin-left: 1px;
}
.v-tick::after {
    content: "";
    position: absolute;
    right: 0;
    top: 18px;
    width: 5px;
    border-top: 1px solid #ccc;
}
.canvas {
    width: 729px;
    flex: none;
    background: #f4f7fb;
}
.uc {
    fill: #3797db;
}
.uc-text {
    font: bold 18px "DejaVu Sans", sans-serif;
    fill: #000;
    text-anchor: middle;
    direction: rtl;
}
.assoc {
    stroke: #111;
    stroke-width: 1;
    fill: none;
    marker-end: url(#tri);
}
.actor {
    stroke: #3797db;
    fill: none;
}
.note-text {
    font: 10px "DejaVu Sans", sans-serif;
    fill: #d8f0f6;
    text-anchor: middle;
    direction: rtl;
}
.canvas-scroll {
    width: 16px;
}
.hscroll {
    height: 17px;
    flex: none;
    display: flex;
}
.htrack {
    width: 713px;
    background: #eee;
    padding-left: 126px;
}
.hthumb {
    width: 349px;
    height: 17px;
    background: #fff;
    border: 1px solid #bbb;
}
.page-bar {
    height: 21px;
    flex: none;
    display: flex;
    align-items: center;
    padding: 1px 0 0 5px;
}
.page-select {
    width: 122px;
    height: 14px;
    margin: 0 12px 0 5px;
    display: flex;
    align-items: center;
    justify-content: space-between;
    line-height: 14px;
    padding: 0 5px 0 2px;
    border-left: 1px solid #888;
    border-right: 1px solid #888;
}
.page-name {
    color: #3a62c0;
    font-weight: 600;
    margin-left: 7px;
    padding-left: 14px;
    border-left: 1px solid #ccc;
    line-height: 14px;
}
.color-bar {
    height: 18px;
    flex: none;
    display: flex;
    align-items: flex-start;
    padding-left: 4px;
}
.fill-label {
    width: 22px;
    line-height: 18px;
    color: #111;
}
.swatches {
    display: flex;
    margin-top: 1px;
}
.swatches i {
    width: 8px;
    height: 13px;
    flex: none;
}

/* fill pane */
.fillpane {
    flex: 1;
    min-width: 0;
    display: flex;
    flex-direction: column;
}
.fill-title {
    padding: 2px 8px 0 9px;
    flex: none;
}
.fill-icons {
    height: 30px;
    flex: none;
    display: flex;
    gap: 3px;
    margin: 3px 0 0 10px;
}
.fill-icons span {
    width: 30px;
    display: flex;
    align-items: center;
    justify-content: center;
}
.fill-icons .on {
    background: #aabcdc;
}
.help {
    font: bold 16px "Liberation Sans", sans-serif;
    fill: #fff;
    text-anchor: middle;
}
.notch-line {
    height: 15px;
    flex: none;
    margin-left: 5px;
    border-bottom: 1px solid #d0d0d0;
    position: relative;
}
.notch-line i {
    position: absolute;
    left: 16px;
    bottom: -5px;
    width: 10px;
    height: 10px;
    background: #fff;
    border-left: 1px solid #d0d0d0;
    border-top: 1px solid #d0d0d0;
    transform: rotate(45deg);
}
.fill-main {
    flex: 1;
    display: flex;
    padding-top: 5px;
    min-height: 0;
}
.fill-content {
    width: 327px;
    flex: none;
    padding: 5px 0 0 10px;
}
.fill-options {
    width: 312px;
    height: 158px;
    padding-top: 6px;
    border: 1px solid #eee;
    margin-bottom: 16px;
}
.fill-options label {
    height: 24px;
    display: flex;
    align-items: center;
    color: #a0a0a0;
    padding-left: 9px;
}
.radio {
    width: 11px;
    height: 11px;
    margin-right: 5px;
    border: 1px solid #eee;
    border-radius: 50%;
    flex: none;
}
.radio.dot {
    background: radial-gradient(circle, #aaa 0, #aaa 2px, transparent 3px);
}
.prop {
    height: 22px;
    margin-bottom: 12px;
    display: flex;
    align-items: center;
    color: #8a8a8a;
    padding-left: 9px;
}
.prop-name {
    width: 83px;
    flex: none;
}
.color-box {
    margin-left: auto;
    width: 64px;
    height: 22px;
    margin-right: 3px;
    border: 1px solid #bbb;
    display: flex;
    align-items: center;
    padding: 0 3px 0 5px;
    gap: 2px;
}
.color-box i {
    width: 47px;
    height: 12px;
    background: #d9d9d9;
}
.slider {
    width: 147px;
    height: 1px;
    background: #ccc;
    position: relative;
    flex: none;
}
.slider i {
    position: absolute;
    left: 0;
    top: -4px;
    width: 9px;
    height: 9px;
    border-radius: 50%;
    background: #c4c4c4;
}
.slider.half {
    background: linear-gradient(90deg, #666 50%, #ccc 50%);
}
.slider.half i {
    left: 70px;
}
.spin {
    margin-left: 11px;
    width: 64px;
    height: 22px;
    flex: none;
    border: 1px solid #bbb;
    display: flex;
    align-items: center;
    justify-content: space-between;
    padding: 0 4px;
}
.spin-arrows {
    display: flex;
    flex-direction: column;
    gap: 3px;
}
.spin-arrows .caret {
    border-left-width: 3px;
    border-right-width: 3px;
}
.fill-scroll {
    margin-left: auto;
    margin-right: 1px;
    width: 16px;
    height: 471px;
}
.fill-scroll .track {
    padding-bottom: 33px;
}

/* status bar */
.statusbar {
    height: 30px;
    flex: none;
    background: #31569f;
    color: #fff;
    display: flex;
    align-items: center;
    padding-left: 11px;
}
.site {
    text-decoration: underline;
}
.pageno {
    margin-left: 10px;
}
.status-right {
    margin-left: auto;
    display: flex;
    align-items: center;
    padding-right: 2px;
}
.view {
    width: 19px;
    height: 19px;
    display: flex;
    align-items: center;
    justify-content: center;
}
.view.on {
    background: #9db2d6;
}
.zoom-sign {
    font-size: 15px;
    width: 19px;
    text-align: center;
}
.zoom-sign.plus {
    width: 20px;
}
.zoom-slider {
    width: 89px;
    height: 2px;
    margin: 0 0 0 4px;
    background: #ccc;
    position: relative;
}
.zoom-slider i {
    position: absolute;
    left: 19px;
    top: -6px;
    width: 5px;
    height: 13px;
    background: #e8e8e8;
    border: 1px solid #999;
}
.zoom-val {
    margin-left: 7px;
    color: #dfe6f3;
}
.status-right > .caret {
    margin: 0 3px 0 4px;
    border-top-color: #8a9bc0;
}

/* taskbar */
.taskbar {
    height: 30px;
    flex: none;
    background: #0b2030;
    color: #d8dde2;
    display: flex;
    align-items: stretch;
}
.apps {
    display: flex;
}
.apps span {
    width: 37.2px;
    display: flex;
    align-items: center;
    justify-content: center;
    border-bottom: 2px solid transparent;
}
.apps .open {
    border-bottom-color: #95c8ea;
}
.apps .active {
    background: #0b4a7e;
}
.w-text {
    font: bold 7px "Liberation Sans", sans-serif;
    fill: #fff;
    text-anchor: middle;
}
.tray {
    margin-left: auto;
    display: flex;
    align-items: center;
    gap: 10px;
    padding-right: 25px;
    font-size: 12px;
}
.t-desktop {
    margin-right: -1px;
}
.t-more {
    margin: -8px 0 0 0;
    font-size: 13px;
    color: #fff;
}
.bt {
    margin: 0 1px;
}
.t-lang {
    margin-right: -2px;
}
.t-note {
    margin-left: 8px;
}
```

FILE: script.js
```js
// palette along the bottom of the drawing area
const colors = [
    "#a4161f", "#d9141f", "#c04d6b", "#ed5565", "#ef6b7a", "#e85d9c", "#d998b5", "#ec8c9b", "#f2949c", "#fba17c", "#f4ae9b", "#f4bcb6", "#e8d5e8", "#fcd3e4", "#fbdde4",
    "#14295c", "#243a73", "#3b2f7c", "#0f4d8e", "#0563a8", "#3f67b5", "#4d82c4", "#0a7ac9", "#1a8fd0", "#2aa0d8", "#0ab1ec", "#39bdef", "#85c2e8", "#9ed2ec", "#c9e5ee",
    "#0f4a2e", "#0a5c36", "#0a6a5a", "#5b6f35", "#1d7a3a", "#239a48", "#0aa26f", "#0ab092", "#56b9ba", "#17c1a5", "#3dbb82", "#0fb152", "#8cb90f", "#a5cc5f", "#c8e2c0",
    "#e34a22", "#ee6a0c", "#f28a00", "#f59e55", "#f7ab00", "#f9b500", "#fbb812", "#fcc82c", "#fdd33a", "#ffe600", "#fde96a", "#fcd56a", "#e8c88e", "#fbd8a0", "#fae3c9",
    "#7b2f80", "#6f3a8c", "#5b3a92", "#7a559f", "#96639f", "#a55a90", "#c279ae", "#a98bc4", "#c8a5cb", "#e8c3d9",
    "#5e2a19", "#7b3e24", "#96512a", "#a6602e", "#bc7a48", "#b98d6c", "#deb585", "#d2d0c0", "#c7d0c2",
    "#0a0a0a", "#3d3d3d", "#5a5a5a", "#737373", "#8a8a8a", "#9c9c9c", "#b0b0b0", "#c8c8c8", "#d8d8d8", "#ebebeb"
];

const swatches = document.getElementById("swatches");
colors.forEach(c => {
    const el = document.createElement("i");
    el.style.background = c;
    swatches.appendChild(el);
});

// rulers
const hRuler = document.getElementById("hRuler");
for (let n = 20; n <= 210; n += 10) {
    const tick = document.createElement("div");
    tick.className = "h-tick";
    tick.textContent = n;
    hRuler.appendChild(tick);
}

const vRuler = document.getElementById("vRuler");
for (let n = 20; n <= 130; n += 10) {
    const tick = document.createElement("div");
    tick.className = "v-tick";
    tick.innerHTML = `<span>${n}</span>`;
    vRuler.appendChild(tick);
}
```
